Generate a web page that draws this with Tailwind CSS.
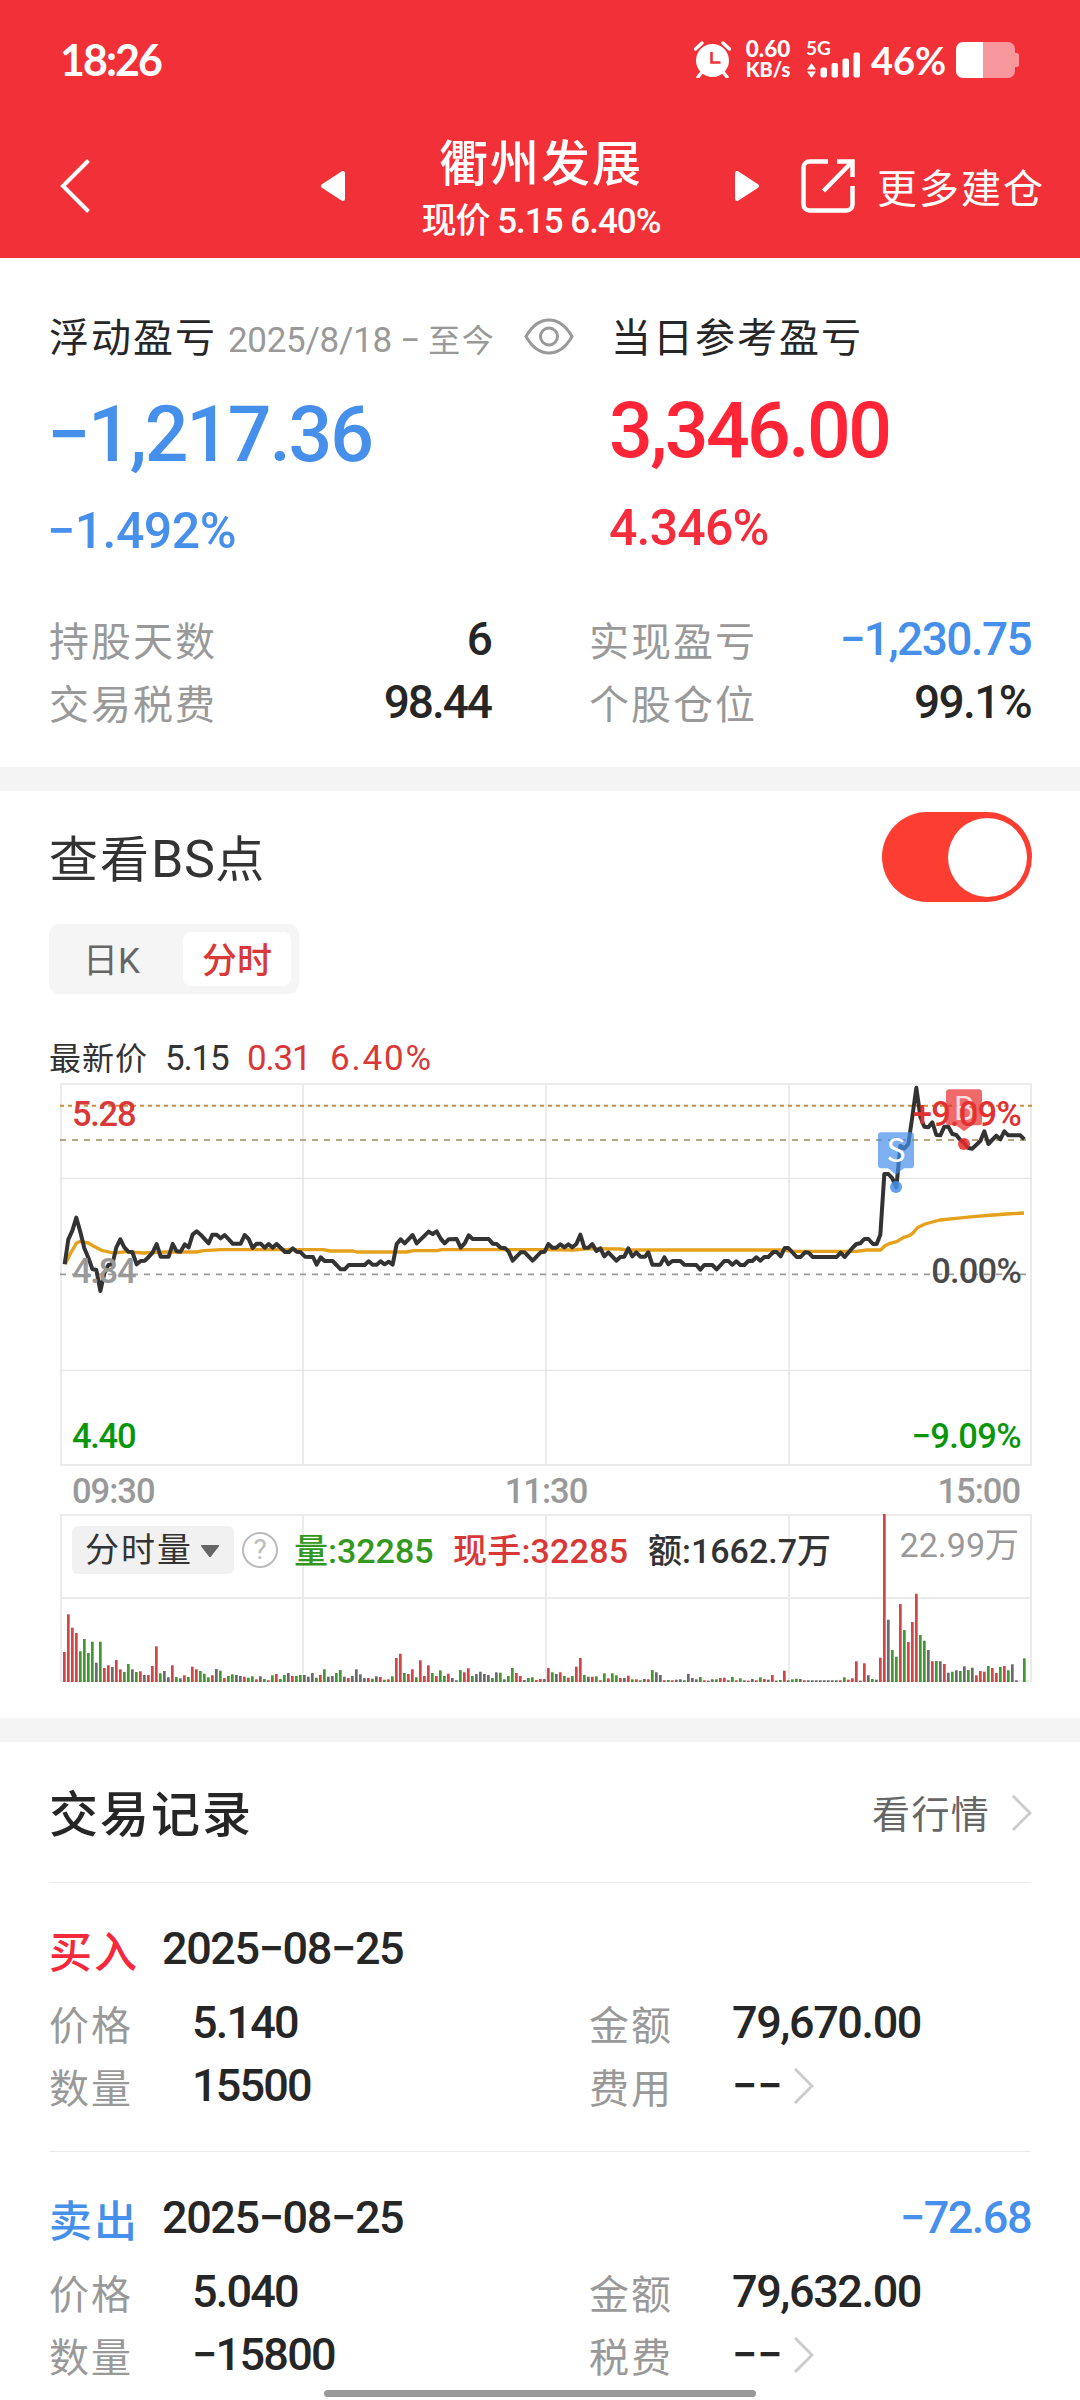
<!DOCTYPE html>
<html lang="zh-CN">
<head>
  <meta charset="UTF-8">
  <meta name="viewport" content="width=device-width, initial-scale=1.0">
  <title>衢州发展</title>
  <script src="https://cdn.jsdelivr.net/npm/@tailwindcss/browser@4"></script>
</head>
<body class="w-[1080px] h-[2400px] overflow-hidden relative bg-white text-[#262626] font-[Roboto,'Noto_Sans_CJK_SC',sans-serif] whitespace-nowrap">

<!-- Header -->
<header class="h-[258px] bg-[#f23038] text-white">
  <!-- Status bar -->
  <div class="h-[118px] flex items-center pl-[60px] font-[Lato,sans-serif] font-bold">
    <span class="w-[634px] pt-0.5 text-[43px] leading-[50px] tracking-[-2px]">18:26</span>
    <svg class="w-[37px] h-[37px]" viewBox="0 0 37 37" fill="none">
      <circle cx="18.5" cy="19.5" r="16.5" fill="#fff"/>
      <path d="M1.5 8 8 2M29 2l6.5 6M4 36l4-5M33 36l-4-5" stroke="#fff" stroke-width="3.4" stroke-linecap="round"/>
      <path d="M17.5 11v10.500h9" stroke="#f23038" stroke-width="2.6"/>
    </svg>
    <div class="w-[62px] ml-[6px] flex flex-col items-center text-[22.500px] leading-[20px] font-black">
      <span>0.60</span>
      <span class="text-[20px]">KB/s</span>
    </div>
    <svg class="w-[56px] h-[38px] ml-[7px] overflow-visible" viewBox="0 0 56 38" fill="#fff">
      <text x="0" y="15" class="text-[19px] font-bold">5G</text>
      <path d="M1 29.500 5.500 23l4.500 6.500zM1 31.500h9L5.500 38z"/>
      <rect x="14.500" y="27.500" width="6.500" height="10" rx="2"/>
      <rect x="25.500" y="23" width="6.500" height="14.500" rx="2"/>
      <rect x="36.500" y="18.500" width="6.500" height="19" rx="2"/>
      <rect x="47.500" y="12.500" width="6.500" height="25" rx="2"/>
    </svg>
    <span class="w-[85px] ml-[9px] text-[38px] leading-[44px] pt-0.5">46%</span>
    <svg class="w-[64px] h-[36px] mt-px" viewBox="0 0 64 36">
      <path d="M27 0H52a7 7 0 0 1 7 7V11h1.500a2.500 2.500 0 0 1 2.500 2.500v9a2.500 2.500 0 0 1-2.500 2.500H59v4a7 7 0 0 1-7 7H27z" fill="#fff" fill-opacity=".5"/>
      <path d="M7 0H27V36H7a7 7 0 0 1-7-7V7a7 7 0 0 1 7-7z" fill="#fff"/>
    </svg>
  </div>
  <!-- Nav bar -->
  <div class="h-[136px] flex items-center pl-[60px]">
    <svg class="w-[30px] h-[54px]" viewBox="0 0 30 54" fill="none" stroke="#fff" stroke-width="4"><path d="M28.500 1.500 3 27l25.500 25.500"/></svg>
    <svg class="w-[24px] h-[32px] ml-[231px]" viewBox="0 0 24 32" fill="#fff" stroke="#fff" stroke-width="4" stroke-linejoin="round"><path d="M2 16 22 3v26z"/></svg>
    <div class="w-[232px] ml-[80px] mt-[14px] flex flex-col items-center">
      <h1 class="text-[49px] leading-[58px] tracking-[2px] font-medium">衢州发展</h1>
      <p class="text-[35px] leading-[56px] tracking-[-1px] font-medium">现价 5.15 6.40%</p>
    </div>
    <svg class="w-[24px] h-[32px] ml-[78px]" viewBox="0 0 24 32" fill="#fff" stroke="#fff" stroke-width="4" stroke-linejoin="round"><path d="M22 16 2 3v26z"/></svg>
    <svg class="w-[54px] h-[54px] ml-[42px]" viewBox="0 0 54 54" fill="none" stroke="#fff" stroke-width="4.500">
      <path d="M27 2.500H8.500a6 6 0 0 0-6 6v37a6 6 0 0 0 6 6h37a6 6 0 0 0 6-6V27M36 2.500H51.500V18M51 3 22.500 32"/>
    </svg>
    <span class="ml-[22px] mt-[7px] text-[40px] leading-[50px] tracking-[2px]">更多建仓</span>
  </div>
</header>

<!-- Profit summary -->
<section class="h-[509px] pt-[50px] pl-[49px] pr-[49px]">
  <div class="grid grid-cols-[562px_1fr]">
    <div class="h-[62px] flex items-center">
      <span class="text-[40px] tracking-[2px]">浮动盈亏</span>
      <span class="w-[297px] ml-[11px] pt-1 text-[35px] tracking-[-0.3px] text-[#999]">2025/8/18 − <span class="text-[32px] tracking-[1.500px]">至今</span></span>
      <svg class="w-[50px] h-[37px] mb-[6px] ml-[-1px]" viewBox="0 0 50 37" fill="none" stroke="#999" stroke-width="3">
        <path d="M2 18.500C8 8 16 2 25 2s17 6 23 16.500C42 29 34 35 25 35S8 29 2 18.500z"/>
        <circle cx="25" cy="18.500" r="8.500"/>
      </svg>
    </div>
    <div class="h-[62px] flex items-center text-[40px] tracking-[2px]">当日参考盈亏</div>
  </div>
  <div class="grid grid-cols-[562px_1fr] mt-5 ml-[-2px] font-medium">
    <div class="h-[90px] flex items-center pt-0.5 text-[77px] tracking-[-2.200px] text-[#468fea]">−1,217.36</div>
    <div class="h-[90px] flex items-center pb-[6px] text-[77px] tracking-[-2.600px] text-[#ff2436]">3,346.00</div>
    <div class="h-[102px] flex items-center text-[50px] tracking-[-0.500px] text-[#468fea]">−1.492%</div>
    <div class="h-[102px] flex items-center pb-[6px] text-[50px] tracking-[-0.8px] text-[#f52c3c]">4.346%</div>
  </div>
  <div class="grid grid-cols-[443px_442px] gap-x-[97px] mt-[29px] text-[46px]">
    <div class="h-[63px] flex items-center justify-between">
      <span class="text-[40px] tracking-[2px] text-[#999]">持股天数</span>
      <span class="pb-[7px] pr-px font-medium tracking-[-2px]">6</span>
    </div>
    <div class="h-[63px] flex items-center justify-between">
      <span class="text-[40px] tracking-[2px] text-[#999]">实现盈亏</span>
      <span class="pb-[7px] font-medium tracking-[-1.6px] text-[#468fea]">−1,230.75</span>
    </div>
    <div class="h-[63px] flex items-center justify-between">
      <span class="text-[40px] tracking-[2px] text-[#999]">交易税费</span>
      <span class="pb-[7px] pr-px font-medium tracking-[-2px]">98.44</span>
    </div>
    <div class="h-[63px] flex items-center justify-between">
      <span class="text-[40px] tracking-[2px] text-[#999]">个股仓位</span>
      <span class="pb-[7px] font-medium tracking-[-1.6px]">99.1%</span>
    </div>
  </div>
</section>

<div class="h-6 bg-[#f4f4f4]"></div>

<!-- BS chart -->
<section class="h-[927px] pt-[21px] px-[49px]">
  <div class="h-[90px] flex items-center justify-between">
    <h2 class="pt-1.5 text-[49px] tracking-[2px] text-[#333]">查看<span class="text-[52px] tracking-[0.500px]">BS</span>点</h2>
    <div class="w-[150px] h-[90px] mr-[-1px] rounded-full bg-[#fc3d32] flex items-center justify-end pr-[5px]">
      <div class="size-[79px] rounded-full bg-white"></div>
    </div>
  </div>
  <div class="w-[250px] h-[70px] mt-[22px] p-2 rounded-[10px] bg-[#f5f5f5] flex text-[35px]">
    <div class="w-[126px] pl-[26px] leading-[60px] text-[#666]">日K</div>
    <div class="w-[108px] rounded-lg bg-white text-center leading-[59px] font-medium text-[#d93838]">分时</div>
  </div>
  <div class="h-[46px] mt-[42px] flex items-center text-[35px] text-[#333]">
    <span class="w-[116px] text-[32px] tracking-[1px]">最新价</span>
    <span class="w-[82px] tracking-[-1.2px]">5.15</span>
    <span class="w-[83px] tracking-[-1.2px] text-[#d93838]">0.31</span>
    <span class="tracking-[1.800px] text-[#d93838]">6.40%</span>
  </div>

  <!-- Price plot, drawn in units of a third of a pixel -->
  <div class="relative w-[973px] h-[383px] mt-[1px] ml-[11px] text-[34.500px] leading-[40px] font-medium">
    <svg class="block w-[973px] h-[383px]" viewBox="0 0 2919 1149" fill="none">
      <g transform="translate(-60 -39)">
        <path d="M60 42H2976M60 1185H2976M63 39V1188M789 39V1188M1518 39V1188M2247 39V1188M2973 39V1188" stroke="#ebebeb" stroke-width="6"/>
        <path d="M60 325H2976M60 901H2976" stroke="#e2e2e2" stroke-width="3"/>
        <path d="M60 107H2976" stroke="#c98d45" stroke-width="6" stroke-dasharray="12 12"/>
        <path d="M60 210H2960" stroke="#b9a783" stroke-width="6" stroke-dasharray="18 18"/>
        <path d="M60 613H2960" stroke="#9b9b9b" stroke-width="5" stroke-dasharray="18 18"/>
        <polyline stroke="#e5a11c" stroke-width="10" stroke-linejoin="round" points="76,582 92,549 109,520 121,514 145,519 160,528 185,541 220,549 260,545 310,549 380,546 470,546 490,542 545,539 850,539 870,543 940,543 950,546 1100,546 1120,542 1190,542 1205,539 1500,539 1600,540 1650,536 1740,537 1760,540 2220,540 2260,544 2450,544 2480,540 2522,540 2534,528 2550,520 2570,515 2590,503 2610,496 2620,488 2632,473 2655,462 2700,450 2740,446 2800,440 2860,435 2900,432 2952,429"/>
        <polyline stroke="#333" stroke-width="12" stroke-linejoin="round" points="74,583 85,508 97,482 109,443 121,486 133,535 145,563 157,597 169,600 181,663 193,610 205,585 217,583 229,532 241,508 253,532 265,545 277,546 290,583 302,573 314,572 326,561 338,547 350,522 362,560 386,560 398,522 410,544 422,545 434,523 446,532 458,493 470,484 482,494 506,520 517,494 530,494 542,505 554,495 578,521 602,521 614,495 626,507 638,534 650,521 662,521 674,533 686,522 698,533 710,522 735,546 747,546 758,535 770,545 782,547 795,560 819,561 830,584 842,562 854,573 878,573 902,598 914,598 926,585 974,585 986,574 998,584 1010,584 1022,574 1034,583 1046,575 1058,584 1070,522 1082,508 1094,520 1118,495 1130,520 1166,485 1178,492 1190,484 1202,506 1214,520 1226,508 1250,507 1262,533 1274,520 1286,496 1298,507 1346,507 1358,521 1370,522 1382,533 1396,535 1406,545 1418,572 1442,547 1454,547 1478,572 1502,547 1514,545 1525,522 1537,533 1549,533 1561,523 1573,532 1585,523 1597,532 1609,522 1621,494 1633,533 1645,533 1657,522 1669,543 1681,535 1693,559 1705,547 1729,572 1741,561 1753,560 1765,535 1777,559 1789,547 1801,560 1815,560 1825,547 1837,584 1861,584 1873,562 1885,583 1897,573 1921,573 1933,584 1969,585 1981,599 1993,585 2017,585 2030,598 2053,573 2065,573 2077,584 2089,574 2101,585 2113,585 2125,573 2137,573 2149,562 2161,572 2173,561 2185,561 2200,546 2210,546 2222,559 2234,534 2245,534 2270,561 2282,561 2295,547 2306,548 2318,561 2390,561 2402,548 2414,561 2437,534 2449,522 2461,520 2473,507 2485,507 2499,522 2510,522 2521,494 2533,312 2545,312 2557,325 2569,352 2581,228 2593,235 2605,222 2617,140 2629,53 2641,140 2653,170 2665,172 2677,157 2689,195 2701,196 2713,170 2725,170 2737,192 2749,195 2761,210 2773,220 2785,234 2797,236 2821,213 2833,184 2845,222 2869,197 2881,208 2893,184 2905,196 2941,196 2953,208"/>
        <!-- sell / buy markers -->
        <g fill="#468fea" fill-opacity=".7">
          <path d="M2524 187H2612a10 10 0 0 1 10 10V285a10 10 0 0 1-10 10H2592L2568 314 2544 295H2524a10 10 0 0 1-10-10V197a10 10 0 0 1 10-10z"/>
          <circle cx="2568" cy="351" r="18" fill-opacity=".85"/>
        </g>
        <g fill="#ea2b2b" fill-opacity=".7">
          <path d="M2728 58H2816a10 10 0 0 1 10 10V156a10 10 0 0 1-10 10H2796L2772 184 2748 166H2728a10 10 0 0 1-10-10V68a10 10 0 0 1 10-10z"/>
          <circle cx="2772" cy="222" r="18" fill-opacity=".85"/>
        </g>
        <g fill="#fff" text-anchor="middle" class="text-[96px] font-normal font-['Noto_Sans_CJK_SC',sans-serif]">
          <text x="2568" y="276">S</text>
          <text x="2772" y="149" fill-opacity=".8">B</text>
        </g>
      </g>
    </svg>
    <div class="absolute inset-0 pl-[12px] pr-[12px] text-[#999]">
      <div class="h-[51px] flex items-end justify-between text-[#d93838]"><span class="tracking-[-1.3px]">5.28</span><span class="text-[#e33030] tracking-[-0.8px]">+9.09%</span></div>
      <div class="h-[157px] flex items-end justify-between"><span class="tracking-[-1.3px]">4.84</span><span class="text-[#4a4a4a] tracking-[-0.8px]">0.00%</span></div>
      <div class="h-[165px] flex items-end justify-between text-[#0a960a]"><span class="tracking-[-1.3px]">4.40</span><span class="tracking-[-0.6px]">−9.09%</span></div>
    </div>
  </div>
  <div class="relative w-[973px] h-[48px] ml-[11px] pt-[3px] pl-[12px] pr-[13px] flex items-center justify-between text-[34.500px] font-medium tracking-[-1px] text-[#999]">
    <span>09:30</span><span>11:30</span><span>15:00</span>
  </div>

  <!-- Volume plot -->
  <div class="relative w-[973px] h-[168px] ml-[11px]">
    <svg class="block w-[973px] h-[168px]" viewBox="0 0 973 168">
      <path d="M0 1H972M0 84H972M0 167H972M1 0V168M243 0V168M486 0V168M729 0V168M971 0V168" stroke="#ebebeb" stroke-width="2" fill="none"/>
      <g id="bars"></g>
    </svg>
    <div class="absolute inset-0 h-[72px] pl-[12px] pr-[14px] flex items-center text-[34px] font-medium">
      <div class="w-[162px] h-[48px] pt-px pl-[13px] rounded-md bg-[#f1f1f1] flex items-center gap-[8px] text-[#333] font-normal">
        <span class="tracking-[2px]">分时量</span>
        <svg class="w-[18px] h-[12px]" viewBox="0 0 18 12" fill="#666"><path d="M1 0H17a1 1 0 0 1 .8 1.500L10 11.500a1 1 0 0 1-2 0L.2 1.500A1 1 0 0 1 1 0z"/></svg>
      </div>
      <div class="size-[36px] ml-[8px] rounded-full border-2 border-[#bbb] text-[#bbb] text-[28px] leading-[32px] text-center font-normal">?</div>
      <span class="w-[159px] ml-[16px] pt-[2px] text-[#339820]">量:32285</span>
      <span class="w-[195px] pt-[2px] tracking-[0.200px] text-[#d93838]">现手:32285</span>
      <span class="pt-[2px] text-[#333]">额:1662.7万</span>
      <span class="ml-auto pb-[10px] text-[#999] font-normal">22.99万</span>
    </div>
  </div>
</section>

<div class="h-6 bg-[#f4f4f4]"></div>

<!-- Trade records -->
<section class="px-[49px]">
  <div class="h-[141px] pt-[7px] border-b border-[#eaeaea] flex items-center justify-between">
    <h2 class="text-[49px] tracking-[2px] font-medium">交易记录</h2>
    <div class="mr-[-1px] flex items-center text-[38px] tracking-[1.300px] text-[#666]">
      看行情
      <svg class="w-[21px] h-[36px] ml-[21px] mb-[6px]" viewBox="0 0 21 36" fill="none" stroke="#ccc" stroke-width="3"><path d="M2 1 19 18 2 35"/></svg>
    </div>
  </div>

  <div class="h-[269px] pt-[37px] border-b border-[#eaeaea]">
    <div class="h-[66px] flex items-center">
      <span class="w-[113px] text-[43px] tracking-[2px] font-medium text-[#f5283c]">买入</span>
      <span class="pb-2 text-[45px] tracking-[-1.400px] font-medium">2025−08−25</span>
    </div>
    <div class="grid grid-cols-[540px_1fr] mt-[9px] text-[45px]">
      <div class="h-[63px] flex items-center"><span class="w-[143px] text-[40px] tracking-[2px] text-[#999]">价格</span><span class="pb-[7px] font-medium tracking-[-1.800px]">5.140</span></div>
      <div class="h-[63px] flex items-center"><span class="w-[143px] text-[40px] tracking-[2px] text-[#999]">金额</span><span class="pb-[7px] font-medium tracking-[-1.400px]">79,670.00</span></div>
      <div class="h-[63px] flex items-center"><span class="w-[143px] text-[40px] tracking-[2px] text-[#999]">数量</span><span class="pb-[7px] font-medium tracking-[-1.800px]">15500</span></div>
      <div class="h-[63px] flex items-center">
        <span class="w-[143px] text-[40px] tracking-[2px] text-[#999]">费用</span><span class="pb-[7px] font-medium">−−</span>
        <svg class="w-[21px] h-[36px] ml-[10px] mb-[7px]" viewBox="0 0 21 36" fill="none" stroke="#ccc" stroke-width="3"><path d="M2 1 19 18 2 35"/></svg>
      </div>
    </div>
  </div>

  <div class="h-[248px] pt-[37px]">
    <div class="h-[66px] flex items-center">
      <span class="w-[113px] text-[43px] tracking-[2px] font-medium text-[#468fea]">卖出</span>
      <span class="pb-2 text-[45px] tracking-[-1.400px] font-medium">2025−08−25</span>
      <span class="ml-auto pb-2 text-[45px] tracking-[-1.500px] font-medium text-[#468fea]">−72.68</span>
    </div>
    <div class="grid grid-cols-[540px_1fr] mt-[9px] text-[45px]">
      <div class="h-[63px] flex items-center"><span class="w-[143px] text-[40px] tracking-[2px] text-[#999]">价格</span><span class="pb-[7px] font-medium tracking-[-1.800px]">5.040</span></div>
      <div class="h-[63px] flex items-center"><span class="w-[143px] text-[40px] tracking-[2px] text-[#999]">金额</span><span class="pb-[7px] font-medium tracking-[-1.400px]">79,632.00</span></div>
      <div class="h-[63px] flex items-center"><span class="w-[143px] text-[40px] tracking-[2px] text-[#999]">数量</span><span class="pb-[7px] font-medium tracking-[-1.700px]">−15800</span></div>
      <div class="h-[63px] flex items-center">
        <span class="w-[143px] text-[40px] tracking-[2px] text-[#999]">税费</span><span class="pb-[7px] font-medium">−−</span>
        <svg class="w-[21px] h-[36px] ml-[10px] mb-[7px]" viewBox="0 0 21 36" fill="none" stroke="#ccc" stroke-width="3"><path d="M2 1 19 18 2 35"/></svg>
      </div>
    </div>
  </div>
</section>

<!-- Home indicator -->
<div class="absolute left-[324px] top-[2390px] w-[432px] h-[7px] rounded-full bg-[#999]"></div>

<script>
  // One entry per minute: top of the bar in thirds of a pixel (72 = plot top, 576 = baseline) and its colour
  const volumes = ('486r 373r 413r 429r 484g 447g 489g 455g 518k 455g 534r 526r 531k 510r 538r 546g 522g 538k 546g 544r ' +
    '555k 555r 528r 469r 550g 543k 562k 526r 561g 565k 556r 561g 530r 538r 543g 551g 562g 556r 537k 542g ' +
    '564r 558g 553g 555k 558k 560r 563g 559g 568r 559k 567g 571r 556g 552r 567g 555g 549k 558r 558g 555g ' +
    '555k 560k 549k 563g 555r 538g 560k 558k 549g 540g 560k 564r 558k 538k 553k 564k 564r 566g 559k 561r ' +
    '569g 568r 559g 504r 491r 549g 552r 538r 562g 511r 558r 526r 549g 558r 541g 558g 551r 564k 571k 540g ' +
    '547r 535r 558g 552k 545k 552k 555k 564g 547k 548g 568k 558g 534g 549r 558r 570k 564g 562g 570r 567r ' +
    '567k 534r 547g 552k 547r 558g 563r 558g 530r 504r 555g 560k 560r 559g 571r 550g 565r 550g 556g 564r ' +
    '564k 557r 568g 568r 571g 567k 568r 540g 547k 555k 571r 570g 571r 569k 568k 571g 552k 564k 568k 561g ' +
    '571r 572k 568k 568g 564r 563r 571k 561g 571r 565g 571k 572r 567k 571r 562g 567r 569k 555r 572k 570g ' +
    '542r 571k 568g 566g 567k 571r 571k 571k 571k 571k 571k 571k 571k 571k 571r 562g 569r 565r 514r 572k ' +
    '520r 556k 567g 569k 503r 72r 389k 480g 500g 342r 420g 456r 396r 311r 435g 452g 480k 514r 513g 514k ' +
    '522r 548k 545g 541k 543g 529k 540g 533k 556r 543r 545r 528g 534r 549r 531g 528r 541g 523k 571k 576k ' +
    '505g').split(' ');
  const colors = { r: '#d64545', g: '#43992f', k: '#6b6b6b' };

  document.getElementById('bars').innerHTML = volumes.map((v, i) => {
    const top = (parseInt(v) - 72) / 3;
    return `<rect x="${(3 + i * 4).toFixed(1)}" y="${top.toFixed(1)}" width="2.7" height="${(168 - top).toFixed(1)}" fill="${colors[v.slice(-1)]}"/>`;
  }).join('');
</script>
</body>
</html>
